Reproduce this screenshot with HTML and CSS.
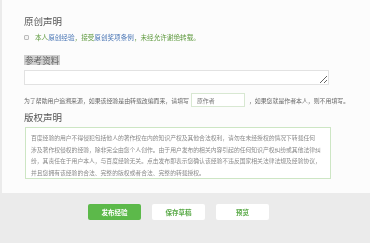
FILE: index.html
```html
<!DOCTYPE html>
<html lang="zh-CN">
<head>
    <meta http-equiv="Content-Type" content="text/html; charset=UTF-8">
    <title>发布经验</title>
    <link rel="stylesheet" href="styles.css">
</head>
<body>
    <!-- Editor Panel -->
    <div class="panel">
        <h2 class="section-title">原创声明</h2>
        <label class="original-check">
            <span class="check-box"></span>
            <span>本人<a href="#">原创经验</a>，接受<a href="#">原创奖项条例</a>，未经允许谢绝转载。</span>
        </label>

        <div class="ref-label"><span>参考资料</span></div>
        <textarea class="ref-text"></textarea>

        <p class="ref-note">
            为了帮助用户追溯来源，如果该经验是由转载改编而来，请填写
            <input type="text" class="author-input" placeholder="原作者">
            ，如果您就是作者本人，则不用填写。
        </p>

        <h2 class="section-title copyright-title">版权声明</h2>
        <div class="copyright-box">
            百度经验的用户不得侵犯包括他人的著作权在内的知识产权及其他合法权利，请勿在未经授权的情况下转载任何<br>
            涉及著作权侵权的经验，除非完全由您个人创作。由于用户发布的相关内容引起的任何知识产权纠纷或其他法律纠<br>
            纷，其责任在于用户本人，与百度经验无关。点击发布即表示您确认该经验不违反国家相关法律法规及经验协议，<br>
            并且您拥有该经验的合法、完整的版权或者合法、完整的转载授权。
        </div>
    </div>

    <!-- Action Bar -->
    <div class="actions">
        <button class="btn btn-primary">发布经验</button>
        <button class="btn">保存草稿</button>
        <button class="btn">预览</button>
    </div>
</body>
</html>
```

FILE: styles.css
```css
/* General Reset */
* {
    margin: 0;
    padding: 0;
    box-sizing: border-box;
    font-family: "Noto Sans CJK SC", "Noto Sans", sans-serif;
}

html, body {
    width: 100%;
    height: 100%;
}

body {
    display: flex;
    flex-direction: column;
    background-color: #ebebeb;
}

/* Editor Panel */
.panel {
    background-color: #fcfcfc;
    height: 193px;
    margin-left: 2px;
    padding: 15px 24px 0 22px;
}

.section-title {
    font-size: 9.5px;
    font-weight: normal;
    line-height: 13px;
    color: #555;
}

.original-check {
    display: flex;
    align-items: center;
    margin-top: 4px;
    height: 10px;
    font-size: 6.6px;
    color: #5f9a3f;
}

.check-box {
    width: 5px;
    height: 5px;
    border: 1px solid #bbb;
    border-radius: 1px;
    background-color: #f4f4f4;
    margin-right: 6px;
}

.original-check a {
    color: #4a76b5;
    text-decoration: none;
}

.ref-label {
    margin-top: 13px;
    line-height: 10px;
    font-size: 8.6px;
    color: #666;
}

.ref-label span {
    background-color: #cfcfcf;
    display: inline-block;
    padding: 0 1px;
}

.ref-text {
    display: block;
    width: 305px;
    height: 15px;
    margin-top: 5px;
    border: 1px solid #e2e2e2;
    background-color: #fff;
    resize: vertical;
}

.ref-note {
    display: flex;
    align-items: center;
    margin-top: 8px;
    font-size: 5.9px;
    color: #666;
    white-space: nowrap;
}

.author-input {
    width: 54px;
    height: 14px;
    margin: 0 4px 0 2px;
    padding: 0 5px;
    border: 1px solid #d8e8d2;
    background-color: #fff;
    font-size: 5.9px;
    color: #666;
}

.author-input::placeholder {
    color: #777;
}

.copyright-title {
    margin-top: 4px;
}

.copyright-box {
    width: 306px;
    height: 52px;
    margin-top: 3px;
    margin-left: 1px;
    padding: 4px 5px;
    border: 1px solid #cde6c4;
    background-color: #fff;
    font-size: 5.8px;
    line-height: 11.7px;
    color: #8a8a8a;
    white-space: nowrap;
}

/* Action Bar */
.actions {
    display: flex;
    gap: 11px;
    padding: 11px 0 0 88px;
}

.btn {
    width: 53px;
    height: 16px;
    border: none;
    border-radius: 2px;
    background-color: #fff;
    color: #5aaa48;
    font-size: 6.5px;
    font-weight: bold;
    cursor: pointer;
}

.btn-primary {
    background-color: #5cb94a;
    color: #fff;
}
```
